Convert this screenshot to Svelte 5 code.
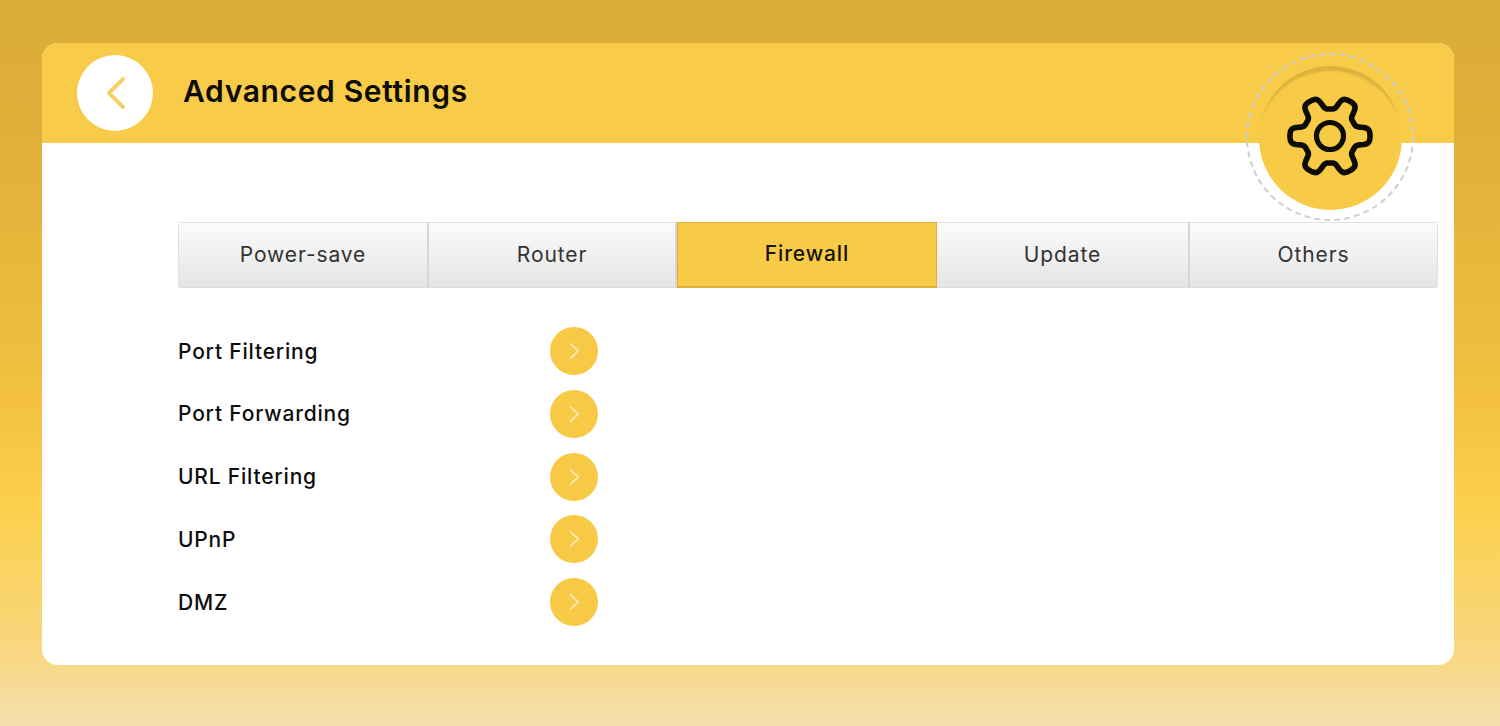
<script lang="ts">
  const tabs = [
    { label: 'Power-save', width: 251 },
    { label: 'Router', width: 248 },
    { label: 'Firewall', width: 260, active: true },
    { label: 'Update', width: 253 },
    { label: 'Others', width: 248 },
  ];

  const items = ['Port Filtering', 'Port Forwarding', 'URL Filtering', 'UPnP', 'DMZ'];

  // six-lobed gear outline in polar form, centred on 50,50
  function gearPath(): string {
    const pts: string[] = [];
    for (let i = 0; i < 360; i += 2) {
      const a = (i * Math.PI) / 180;
      const k = Math.tanh(2.2 * Math.cos(6 * a)) / Math.tanh(2.2);
      const r = 33.5 + 6.5 * k;
      pts.push(`${(50 + r * Math.cos(a)).toFixed(2)} ${(50 + r * Math.sin(a)).toFixed(2)}`);
    }
    return `M${pts.join('L')}Z`;
  }
</script>

<div class="page">
  <section class="card">
    <header class="head">
      <button type="button" class="back" aria-label="Back">
        <svg viewBox="0 0 24 36" width="24" height="36">
          <path d="M20 4 L6 18 L20 32" fill="none" stroke="#f7d066" stroke-width="4" stroke-linecap="round" stroke-linejoin="round" />
        </svg>
      </button>
      <h1>Advanced Settings</h1>
    </header>

    <div class="badge">
      <div class="disc">
        <svg viewBox="0 0 100 100" width="100" height="100">
          <path d={gearPath()} fill="none" stroke="#0d0b06" stroke-width="5.6" stroke-linejoin="round" />
          <circle cx="50" cy="50" r="13.5" fill="none" stroke="#0d0b06" stroke-width="5.2" />
        </svg>
      </div>
    </div>

    <div class="body">
      <nav class="tabs">
        {#each tabs as tab}
          <button type="button" class="tab" class:active={tab.active} style="width: {tab.width}px">{tab.label}</button>
        {/each}
      </nav>

      <ul class="list">
        {#each items as item}
          <li>
            <span class="name">{item}</span>
            <button type="button" class="go" aria-label={item}>
              <svg viewBox="0 0 14 22" width="11" height="18">
                <path d="M2 2 L12 11 L2 20" fill="none" stroke="#fbe6a8" stroke-width="2.6" stroke-linecap="round" stroke-linejoin="round" />
              </svg>
            </button>
          </li>
        {/each}
      </ul>
    </div>
  </section>
</div>

<style>
  :global(body) {
    margin: 0;
  }

  .page {
    box-sizing: border-box;
    height: 726px;
    padding: 43px 46px 61px 42px;
    overflow: hidden;
    font-family: Inter, 'Liberation Sans', sans-serif;
    background: linear-gradient(
      180deg,
      #d9ab38 0%,
      #e2b23a 25%,
      #f3c13f 55%,
      #fbd04c 70%,
      #f9d67a 88%,
      #f4dfae 100%
    );
  }

  .card {
    position: relative;
    height: 622px;
    background: #fff;
    border-radius: 16px;
    overflow: hidden;
  }

  .head {
    height: 100px;
    background: #f8cc49;
    display: flex;
    align-items: center;
    gap: 30px;
    padding-left: 35px;
  }

  .back {
    width: 76px;
    height: 76px;
    border: 0;
    border-radius: 50%;
    background: #fff;
    display: flex;
    align-items: center;
    justify-content: center;
    padding: 0;
  }

  h1 {
    margin: 0 0 4px;
    font-size: 30px;
    font-weight: 600;
    letter-spacing: 0.65px;
    color: #0d0b06;
    line-height: 1;
  }

  .badge {
    position: absolute;
    top: 10px;
    left: 1204px;
    width: 164px;
    height: 164px;
    border: 2px dashed #ccd0d2;
    border-radius: 50%;
    display: flex;
    align-items: center;
    justify-content: center;
  }

  .disc {
    width: 143px;
    height: 144px;
    margin-top: 1px;
    border-radius: 50%;
    background: #f8cb46;
    box-shadow: inset 0 8px 2px -3px #dcb23f;
    display: flex;
    align-items: center;
    justify-content: center;
  }

  .disc svg {
    margin-top: -4px;
  }

  .body {
    padding: 79px 16px 0 136px;
  }

  .tabs {
    display: flex;
    height: 66px;
    border-radius: 3px;
    overflow: hidden;
  }

  .tab {
    box-sizing: border-box;
    border: 0;
    border-top: 1px solid #e0e0e0;
    border-bottom: 1px solid #dcdcdc;
    border-right: 2px solid #d6d6d6;
    background: linear-gradient(180deg, #fbfbfb 0%, #e5e5e5 100%);
    font: inherit;
    font-size: 21px;
    letter-spacing: 0.9px;
    color: #333;
    padding: 0 0 2px;
  }

  .tab:first-child {
    border-left: 1px solid #e0e0e0;
  }

  .tab:last-child {
    border-right: 1px solid #e0e0e0;
  }

  .tab.active {
    background: #f8cb46;
    border: 1px solid #dcae3a;
    border-bottom-width: 2px;
    font-weight: 500;
    color: #17130a;
  }

  .list {
    list-style: none;
    margin: 39px 0 0;
    padding: 0;
    display: flex;
    flex-direction: column;
    gap: 14.8px;
  }

  li {
    display: flex;
    align-items: center;
    height: 48px;
  }

  .name {
    width: 372px;
    font-size: 21px;
    font-weight: 500;
    letter-spacing: 0.8px;
    color: #0d0d0d;
  }

  .go {
    width: 48px;
    height: 48px;
    border: 0;
    border-radius: 50%;
    background: #f7c945;
    padding: 0;
    display: flex;
    align-items: center;
    justify-content: center;
  }
</style>
